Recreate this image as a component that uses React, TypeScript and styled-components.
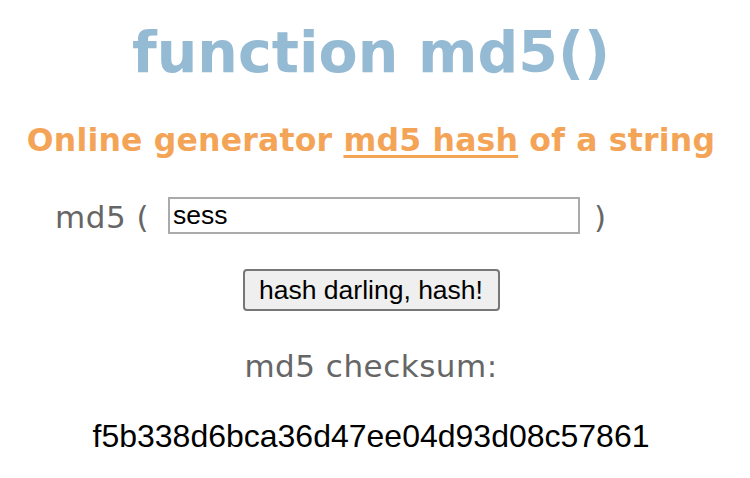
import React from "react";
import styled, { createGlobalStyle } from "styled-components";

const Global = createGlobalStyle`
  html, body { margin: 0; padding: 0; background: #fff; }
  body { width: 750px; height: 478px; overflow: hidden; }
`;

const Page = styled.div`
  width: 742px;
  display: flex;
  flex-direction: column;
  align-items: center;
  font-family: "DejaVu Sans", Verdana, sans-serif;
`;

const Title = styled.h1`
  margin: 19px 0 0;
  font-size: 57px;
  line-height: 66px;
  font-weight: bold;
  color: #95bad4;
`;

const Subtitle = styled.h2`
  margin: 35px 0 0;
  font-size: 31.5px;
  line-height: 40px;
  letter-spacing: 0.2px;
  font-weight: bold;
  color: #f4a457;
  a {
    color: inherit;
    text-decoration: underline;
    text-decoration-thickness: 3px;
    text-underline-offset: 4px;
  }
`;

const Row = styled.div`
  margin-top: 37px;
  width: 100%;
  display: flex;
  align-items: center;
  padding-left: 55px;
  box-sizing: border-box;
`;

const Paren = styled.span<{ $gap?: number }>`
  font-size: 31px;
  line-height: 37px;
  letter-spacing: 0.5px;
  color: #666;
  margin-left: ${p => p.$gap ?? 0}px;
  transform: translateY(2px);
`;

const Input = styled.input`
  margin-left: 19px;
  width: 412px;
  height: 37px;
  box-sizing: border-box;
  border: 2px solid #aaa;
  padding: 0 3px;
  font-family: "Liberation Sans", Arial, sans-serif;
  font-size: 26.5px;
  color: #000;
  outline: none;
  background: #fff;
`;

const Button = styled.button`
  margin-top: 35px;
  width: 257px;
  height: 42px;
  padding: 0;
  border: 2px solid #777;
  border-radius: 4px;
  background: #efefef;
  font-family: "Liberation Sans", Arial, sans-serif;
  font-size: 26.5px;
  color: #000;
`;

const Label = styled.div`
  margin-top: 37px;
  font-size: 31px;
  line-height: 36px;
  letter-spacing: 0.5px;
  color: #666;
`;

const Hash = styled.div`
  margin-top: 34px;
  font-family: "Liberation Sans", Arial, sans-serif;
  font-size: 32px;
  line-height: 37px;
  color: #000;
`;

export default function App() {
  return (
    <Page>
      <Global />
      <Title>function md5()</Title>
      <Subtitle>
        Online generator <a href="#">md5 hash</a> of a string
      </Subtitle>
      <Row>
        <Paren>md5 (</Paren>
        <Input defaultValue="sess" />
        <Paren $gap={14}>)</Paren>
      </Row>
      <Button>hash darling, hash!</Button>
      <Label>md5 checksum:</Label>
      <Hash>f5b338d6bca36d47ee04d93d08c57861</Hash>
    </Page>
  );
}
